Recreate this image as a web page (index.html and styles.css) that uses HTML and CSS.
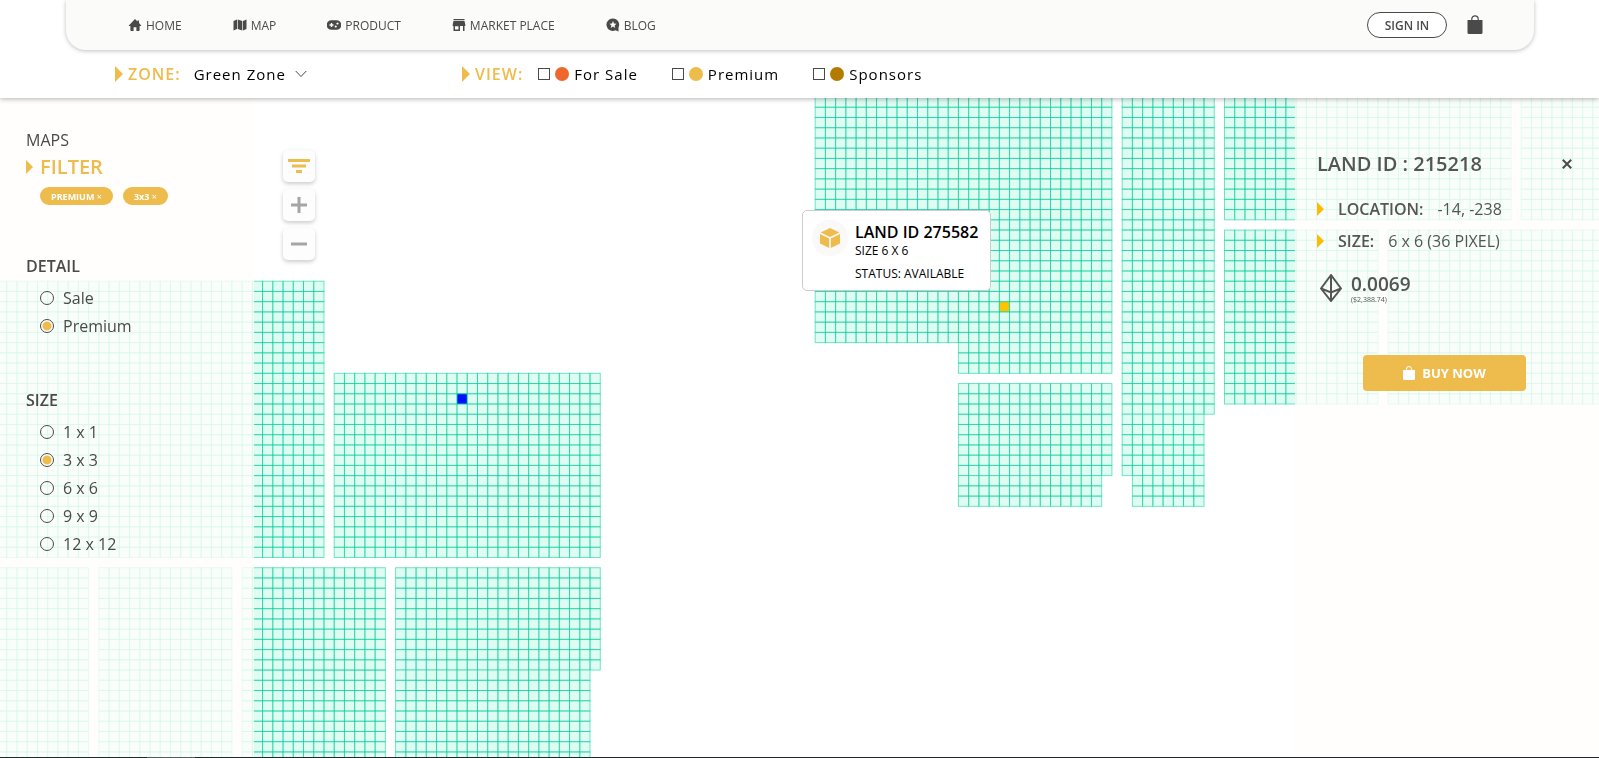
FILE: index.html
```html
<!DOCTYPE html>
<html lang="en">
<head>
<meta charset="utf-8">
<title>Land map</title>
<link rel="stylesheet" href="styles.css">
</head>
<body>
<header class="header">
  <div class="topbar">
    <nav class="nav">
      <a class="nav-link" href="#"><svg class="icon" viewBox="0 0 14 14"><path d="M7 1 .8 7.4Q.6 8 1.2 8H2.400V12.300Q2.400 13 3.100 13H5.600V9.300H8.400V13H10.900Q11.600 13 11.600 12.300V8H12.800Q13.400 8 13.200 7.400L11 5.100V2.500H9.500V3.500Z"/></svg>HOME</a>
      <a class="nav-link" href="#"><svg class="icon" viewBox="0 0 14 14"><path d="M.5 3 4 1.500V11L.5 12.500ZM4.700 1.500 9.300 3V12.500L4.700 11ZM10 3 13.500 1.500V11L10 12.500Z"/></svg>MAP</a>
      <a class="nav-link" href="#"><svg class="icon" viewBox="0 0 14 14"><path fill-rule="evenodd" d="M4.500 2.200H9.500A4.600 4.600 0 0 1 9.500 11.800H4.500A4.600 4.600 0 0 1 4.500 2.200ZM3.800 5V6.300H2.500V7.700H3.800V9H5.200V7.700H6.500V6.300H5.200V5ZM10.500 4.400A1.100 1.100 0 1 0 10.510 4.400ZM8.700 7.400A1.100 1.100 0 1 0 8.710 7.400Z"/></svg>PRODUCT</a>
      <a class="nav-link" href="#"><svg class="icon" viewBox="0 0 14 14"><path fill-rule="evenodd" d="M1.500 1H12.500V2.300H1.500ZM1.500 3H12.500L13.300 6.500V8H12.500V13H11V8H8V13H1.500V8H.7V6.500ZM3 8.200V11.500H6.500V8.200Z"/></svg>MARKET PLACE</a>
      <a class="nav-link" href="#"><svg class="icon" viewBox="0 0 14 14"><path fill-rule="evenodd" d="M7 .5A6.200 6.200 0 0 1 12.500 9.500V13.500L9.500 12.200A6.200 6.200 0 1 1 7 .5ZM7 3 6 5.500 3.500 5.700 5.400 7.400 4.800 10 7 8.600 9.200 10 8.600 7.400 10.500 5.700 8 5.500Z"/></svg>BLOG</a>
    </nav>
    <div class="account">
      <button class="sign-in" type="button">SIGN IN</button>
      <button class="plain-button" type="button" aria-label="Cart"><svg class="bag" viewBox="0 0 16 20"><path d="M.5 5H15.500V17.500Q15.500 19 14 19H2Q.5 19 .5 17.500Z"/><path d="M4.800 6V4A3.200 3.200 0 0 1 11.200 4V6" fill="none" stroke="currentColor" stroke-width="1.200"/></svg></button>
    </div>
  </div>
  <div class="filterbar">
    <div class="zone">
      <label class="bar-title" for="zone"><span class="marker marker-large"></span>ZONE:</label>
      <div class="zone-field">
        <select class="zone-select" id="zone"><option>Green Zone</option></select>
        <svg class="chevron" viewBox="0 0 12 8"><path d="M.7 1 6 6.500 11.300 1"/></svg>
      </div>
    </div>
    <div class="view">
      <span class="bar-title"><span class="marker marker-large"></span>VIEW:</span>
      <label class="view-option"><input class="check" type="checkbox"><span class="dot dot-sale"></span>For Sale</label>
      <label class="view-option"><input class="check" type="checkbox"><span class="dot dot-premium"></span>Premium</label>
      <label class="view-option"><input class="check" type="checkbox"><span class="dot dot-sponsors"></span>Sponsors</label>
    </div>
  </div>
</header>
<main class="stage">
  <canvas class="map" id="map"></canvas>
  <aside class="filters">
    <p class="eyebrow">MAPS</p>
    <h1 class="filter-title"><span class="marker"></span>FILTER</h1>
    <div class="tags">
      <button class="tag" type="button">PREMIUM <span class="tag-close">×</span></button>
      <button class="tag" type="button">3x3 <span class="tag-close">×</span></button>
    </div>
    <fieldset class="group">
      <legend class="group-title">DETAIL</legend>
      <label class="choice"><input class="radio" type="radio" name="detail">Sale</label>
      <label class="choice"><input class="radio" type="radio" name="detail" checked>Premium</label>
    </fieldset>
    <fieldset class="group">
      <legend class="group-title">SIZE</legend>
      <label class="choice"><input class="radio" type="radio" name="size">1 x 1</label>
      <label class="choice"><input class="radio" type="radio" name="size" checked>3 x 3</label>
      <label class="choice"><input class="radio" type="radio" name="size">6 x 6</label>
      <label class="choice"><input class="radio" type="radio" name="size">9 x 9</label>
      <label class="choice"><input class="radio" type="radio" name="size">12 x 12</label>
    </fieldset>
  </aside>
  <div class="controls">
    <button class="control control-active" type="button" aria-label="Filter"><svg class="control-icon" viewBox="0 0 24 24"><path d="M1 6.500H23M5 12H19M9 17.500H15"/></svg></button>
    <button class="control" type="button" aria-label="Zoom in"><svg class="control-icon" viewBox="0 0 24 24"><path d="M4 12H20M12 4V20"/></svg></button>
    <button class="control" type="button" aria-label="Zoom out"><svg class="control-icon" viewBox="0 0 24 24"><path d="M4 12H20"/></svg></button>
  </div>
  <div class="popup">
    <span class="popup-badge"><svg class="cube" viewBox="0 0 20 20"><path d="M10 0 19.300 4.500 10 9 .7 4.500ZM0 6 9.200 10.400V20L0 15.500ZM20 6 10.800 10.400V20L20 15.500Z"/></svg></span>
    <div>
      <h2 class="popup-title">LAND ID 275582</h2>
      <p class="popup-text">SIZE 6 X 6</p>
      <p class="popup-text popup-status">STATUS: AVAILABLE</p>
    </div>
  </div>
  <section class="detail">
    <div class="detail-head">
      <h2 class="detail-title">LAND ID : 215218</h2>
      <button class="plain-button" type="button" aria-label="Close"><svg class="close" viewBox="0 0 10 10"><path d="M.8.8 9.200 9.200M9.200.8.8 9.200"/></svg></button>
    </div>
    <dl class="facts">
      <div class="fact"><dt class="fact-name"><span class="marker marker-bright"></span>LOCATION:</dt><dd class="fact-value">-14, -238</dd></div>
      <div class="fact"><dt class="fact-name"><span class="marker marker-bright"></span>SIZE:</dt><dd class="fact-value">6 x 6 (36 PIXEL)</dd></div>
    </dl>
    <div class="price">
      <svg class="ether" viewBox="0 0 22 28"><path d="M11 1 1 14.500 11 27 21 14.500ZM1 14.500 11 18.500 21 14.500M11 1V27"/></svg>
      <div>
        <p class="price-main">0.0069</p>
        <p class="price-usd">($2,388.74)</p>
      </div>
    </div>
    <button class="buy" type="button"><svg class="buy-bag" viewBox="0 0 12 14"><path d="M0 4H12V12.500Q12 14 10.500 14H1.500Q0 14 0 12.500Z"/><path d="M3.500 4.500V3A2.500 2.500 0 0 1 8.500 3V4.500" fill="none" stroke="currentColor"/></svg>BUY NOW</button>
  </section>
</main>
<footer class="taskbar"><span class="taskbar-item"></span></footer>
<script src="map.js"></script>
</body>
</html>
```
FILE: styles.css
```css
* { box-sizing: border-box; }

body {
  margin: 0;
  min-height: 100vh;
  display: flex;
  flex-direction: column;
  background: #fff;
  color: #4a4a4a;
  font-family: "Open Sans", "Noto Sans", sans-serif;
  font-size: 16px;
}

h1, h2, p, dl, dd { margin: 0; }
button { font-family: inherit; cursor: pointer; }
.plain-button { display: flex; padding: 0; border: 0; background: none; color: #4a4a4a; }

.header {
  position: relative;
  z-index: 2;
  background: #fff;
  box-shadow: 0 1px 5px rgba(0, 0, 0, .3);
}
.topbar {
  display: flex;
  justify-content: space-between;
  align-items: center;
  height: 50px;
  margin: 0 65px 0 66px;
  padding: 0 51px 0 62px;
  background: #fbfbf9;
  border-radius: 0 0 20px 20px;
  box-shadow: 0 1px 4px rgba(0, 0, 0, .25);
}
.nav { display: flex; gap: 51px; }
.nav-link {
  display: flex;
  align-items: center;
  gap: 4px;
  color: #4a4a4a;
  font-size: 12px;
  text-decoration: none;
}
.icon { width: 14px; height: 14px; fill: #4a4a4a; }
.account { display: flex; align-items: center; gap: 20px; }
.sign-in {
  width: 80px;
  height: 26px;
  padding: 0;
  border: 1px solid #4a4a4a;
  border-radius: 13px;
  background: #fff;
  color: #4a4a4a;
  font-size: 12px;
  font-weight: 600;
}
.bag { width: 16px; height: 20px; fill: currentColor; }

.filterbar {
  display: flex;
  align-items: center;
  height: 48px;
  padding-left: 115px;
  color: #000;
  letter-spacing: 1px;
}
.zone, .view { display: flex; align-items: center; }
.zone { width: 347px; }
.bar-title { display: flex; align-items: center; gap: 5px; color: #eebb4d; font-weight: 600; }
.marker {
  flex: none;
  width: 7px;
  height: 14px;
  background: #eebb4d;
  clip-path: polygon(0 0, 100% 50%, 0 100%);
}
.marker-large { width: 8px; height: 16px; }
.marker-bright { background: #fdbc04; }
.zone-field { display: flex; align-items: center; margin-left: 13px; }
.zone-select {
  appearance: none;
  width: 113px;
  margin-right: -12px;
  padding: 0;
  border: 0;
  background: none;
  color: #000;
  font: inherit;
  font-size: 15px;
  letter-spacing: 1px;
}
.chevron { width: 12px; height: 8px; fill: none; stroke: #4a4a4a; pointer-events: none; }
.view-option { display: flex; align-items: center; margin-left: 34px; font-size: 15px; }
.bar-title + .view-option { margin-left: 15px; }
.check {
  appearance: none;
  width: 12px;
  height: 12px;
  margin: 0 5px 0 0;
  border: 1px solid #4a4a4a;
  background: #fff;
}
.check:checked { background: #4a4a4a; }
.dot { width: 14px; height: 14px; margin-right: 5px; border-radius: 50%; }
.dot-sale { background: #ee682d; }
.dot-premium { background: #eebb4d; }
.dot-sponsors { background: #b37b00; }

.stage {
  position: relative;
  flex: 1;
  display: flex;
  overflow: hidden;
}
.map { position: absolute; inset: 0; width: 100%; height: 100%; }

.filters {
  position: relative;
  width: 254px;
  padding: 30px 26px;
  background: rgba(255, 254, 252, .84);
}
.eyebrow { line-height: 24px; }
.filter-title {
  display: flex;
  align-items: center;
  gap: 7px;
  color: #eebb4d;
  font-size: 20px;
  font-weight: 600;
  line-height: 30px;
}
.tags { display: flex; gap: 10px; margin: 5px 0 48px 14px; }
.tag {
  height: 18px;
  padding: 0 11px;
  border: 0;
  border-radius: 9px;
  background: #eebb4d;
  color: #fff;
  font-size: 9px;
  font-weight: 700;
}
.tag-close { font-weight: 400; }
.group { margin: 0 0 47px; padding: 0; border: 0; }
.group-title { padding: 0 0 5px; font-weight: 600; line-height: 26px; }
.choice {
  display: flex;
  align-items: center;
  gap: 9px;
  height: 28px;
  padding-left: 14px;
}
.radio {
  appearance: none;
  width: 14px;
  height: 14px;
  margin: 0;
  border: 1px solid #4a4a4a;
  border-radius: 50%;
}
.radio:checked { background: radial-gradient(circle, #eebb4d 4px, #fff 5px); }

.controls {
  position: relative;
  display: flex;
  flex-direction: column;
  gap: 7px;
  padding: 52px 0 0 29px;
}
.control {
  display: flex;
  align-items: center;
  justify-content: center;
  width: 32px;
  height: 32px;
  padding: 0;
  border: 0;
  border-radius: 5px;
  background: #fdfdfd;
  color: #a5a5a5;
  box-shadow: 0 2px 4px rgba(0, 0, 0, .2);
}
.control-active { color: #eebb4d; }
.control-icon { width: 24px; height: 24px; fill: none; stroke: currentColor; stroke-width: 3; }

.popup {
  position: absolute;
  left: 802px;
  top: 112px;
  display: flex;
  gap: 7px;
  padding: 9px 12px 9px 9px;
  border: 1px solid #ccc;
  border-radius: 5px;
  background: #fff;
  color: #000;
}
.popup-badge {
  display: flex;
  align-items: center;
  justify-content: center;
  flex: none;
  width: 36px;
  height: 36px;
  border-radius: 50%;
  background: #faf9f7;
}
.cube { width: 20px; height: 20px; fill: #eebb4d; }
.popup-title { font-size: 16px; font-weight: 600; line-height: 24px; }
.popup-text { font-size: 12px; line-height: 14px; }
.popup-status { margin-top: 9px; }

.detail {
  position: relative;
  display: flex;
  flex-direction: column;
  width: 304px;
  margin-left: auto;
  padding: 52px 27px 0 22px;
  background: rgba(255, 254, 252, .84);
  color: #555;
}
.detail-head { display: flex; justify-content: space-between; align-items: center; }
.detail-title { font-size: 20px; font-weight: 600; line-height: 28px; }
.close { width: 10px; height: 10px; fill: none; stroke: #4a4a4a; stroke-width: 2; }
.facts { padding-top: 15px; }
.fact { display: flex; gap: 14px; line-height: 32px; }
.fact-name { display: flex; align-items: center; gap: 14px; font-weight: 600; }
.price { display: flex; align-items: center; gap: 9px; margin: 15px 0 0 3px; }
.ether { width: 22px; height: 28px; fill: none; stroke: #555; stroke-width: 2; }
.price-main { font-size: 19px; font-weight: 600; line-height: 24px; }
.price-usd { font-size: 7px; line-height: 8px; }
.buy {
  display: flex;
  align-items: center;
  justify-content: center;
  gap: 7px;
  width: 163px;
  height: 36px;
  margin: 51px 0 0 46px;
  padding: 0;
  border: 0;
  border-radius: 4px;
  background: #eebb4d;
  color: #fff;
  font-size: 13px;
  font-weight: 700;
}
.buy-bag { width: 12px; height: 14px; fill: currentColor; }

.taskbar { height: 1px; padding-left: 147px; background: #22292d; }
.taskbar-item { display: block; width: 48px; height: 1px; background: #555b5f; }
```
FILE: map.js
```js
const canvas = document.getElementById("map");
const ctx = canvas.getContext("2d");

// Grid origin inside the canvas and side of one parcel, in pixels.
const origin = { x: 334.2, y: 275.3 };
const cell = 10.233;

// Blocks of parcels: first column, last column, first row, last row.
const blocks = [
  [47, 76, -28, -3], [61, 76, -3, 0],
  [61, 76, 1, 10], [61, 75, 10, 13],
  [77, 86, -28, 4], [77, 85, 4, 10], [78, 85, 10, 13],
  [87, 115, -28, -15], [116, 125, -28, -15],
  [87, 102, -14, 3], [103, 125, -14, 3],
  [-33, -1, -9, 18], [0, 26, 0, 18],
  [-33, -24, 19, 38], [-23, -10, 19, 38], [-9, 5, 19, 38],
  [6, 26, 19, 29], [6, 25, 29, 38]
];
const marked = { "12,2": "#0010ff", "65,-7": "#ffc400" };

function draw() {
  canvas.width = canvas.clientWidth;
  canvas.height = canvas.clientHeight;
  ctx.strokeStyle = "rgba(0, 205, 155, .55)";
  for (const [left, right, top, bottom] of blocks) {
    for (let col = left; col < right; col++) {
      for (let row = top; row < bottom; row++) {
        const x = origin.x + col * cell;
        const y = origin.y + row * cell;
        ctx.fillStyle = marked[col + "," + row] || "#dffcf2";
        ctx.fillRect(x, y, cell, cell);
      }
    }
    for (let col = left; col < right; col++) {
      for (let row = top; row < bottom; row++) {
        ctx.strokeRect(origin.x + col * cell, origin.y + row * cell, cell, cell);
      }
    }
  }
}

draw();
window.addEventListener("resize", draw);
```
